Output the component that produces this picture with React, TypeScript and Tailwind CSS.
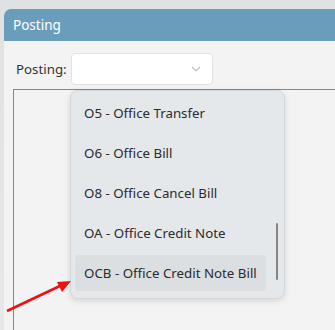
import React from "react";

const items = [
  "O5 - Office Transfer",
  "O6 - Office Bill",
  "O8 - Office Cancel Bill",
  "OA - Office Credit Note",
  "OCB - Office Credit Note Bill",
];

export default function App() {
  return (
    <div
      className="relative w-[335px] h-[330px] overflow-hidden bg-gradient-to-b from-[#dfe1e3] to-[#e6e8ea] pt-[9px] pl-[4px]"
      style={{ fontFamily: '"Noto Sans", "Open Sans", sans-serif' }}
    >
      <div className="h-full rounded-tl-[7px] bg-[#f3f3f3] flex flex-col">
        <div className="h-[32px] shrink-0 rounded-tl-[7px] bg-[#6a9dbc] text-white text-[13.5px] pl-[9px] flex items-center">
          Posting
        </div>
        <div className="flex items-center pt-[12px] pl-[12px]">
          <span className="w-[55px] text-[13.3px] text-[#333333] pt-[1px]">Posting:</span>
          <div className="w-[142px] h-[32px] bg-white rounded-[4px] border border-[#e2e2e2] flex items-center justify-end pr-[11px]">
            <svg width="10" height="6" viewBox="0 0 10 6">
              <path d="M1 1 L5 5 L9 1" fill="none" stroke="#b8bcc2" strokeWidth="1.2" />
            </svg>
          </div>
        </div>
        <div className="ml-[9px] mt-[4px] flex-1 border-l border-t border-[#7f8790]" />
      </div>

      <div className="absolute left-[70px] top-[90px] w-[215px] h-[209px] rounded-[8px] border border-[#d3d8dd] bg-[#e5e8eb] shadow-[0_2px_6px_rgba(0,0,0,0.12)] pt-[4px] px-[4px] flex flex-col gap-[4px]">
        {items.map((t, i) => (
          <div
            key={t}
            className={`h-[36px] w-[191px] shrink-0 rounded-[4px] flex items-center pl-[9px] pt-[1px] text-[13.3px] text-[#2b2b2b] ${
              i === 4 ? "bg-[#dcdfe2]" : ""
            }`}
          >
            {t}
          </div>
        ))}
        <div className="absolute left-[205px] top-[132px] w-[2px] h-[57px] rounded-full bg-[#858585]" />
      </div>

      <svg className="absolute left-0 top-0" width="335" height="330">
        <line x1="7" y1="311" x2="62" y2="285" stroke="#ee1111" strokeWidth="2.5" />
        <polygon points="71,281 57,282 62,292" fill="#ee1111" />
      </svg>
    </div>
  );
}
